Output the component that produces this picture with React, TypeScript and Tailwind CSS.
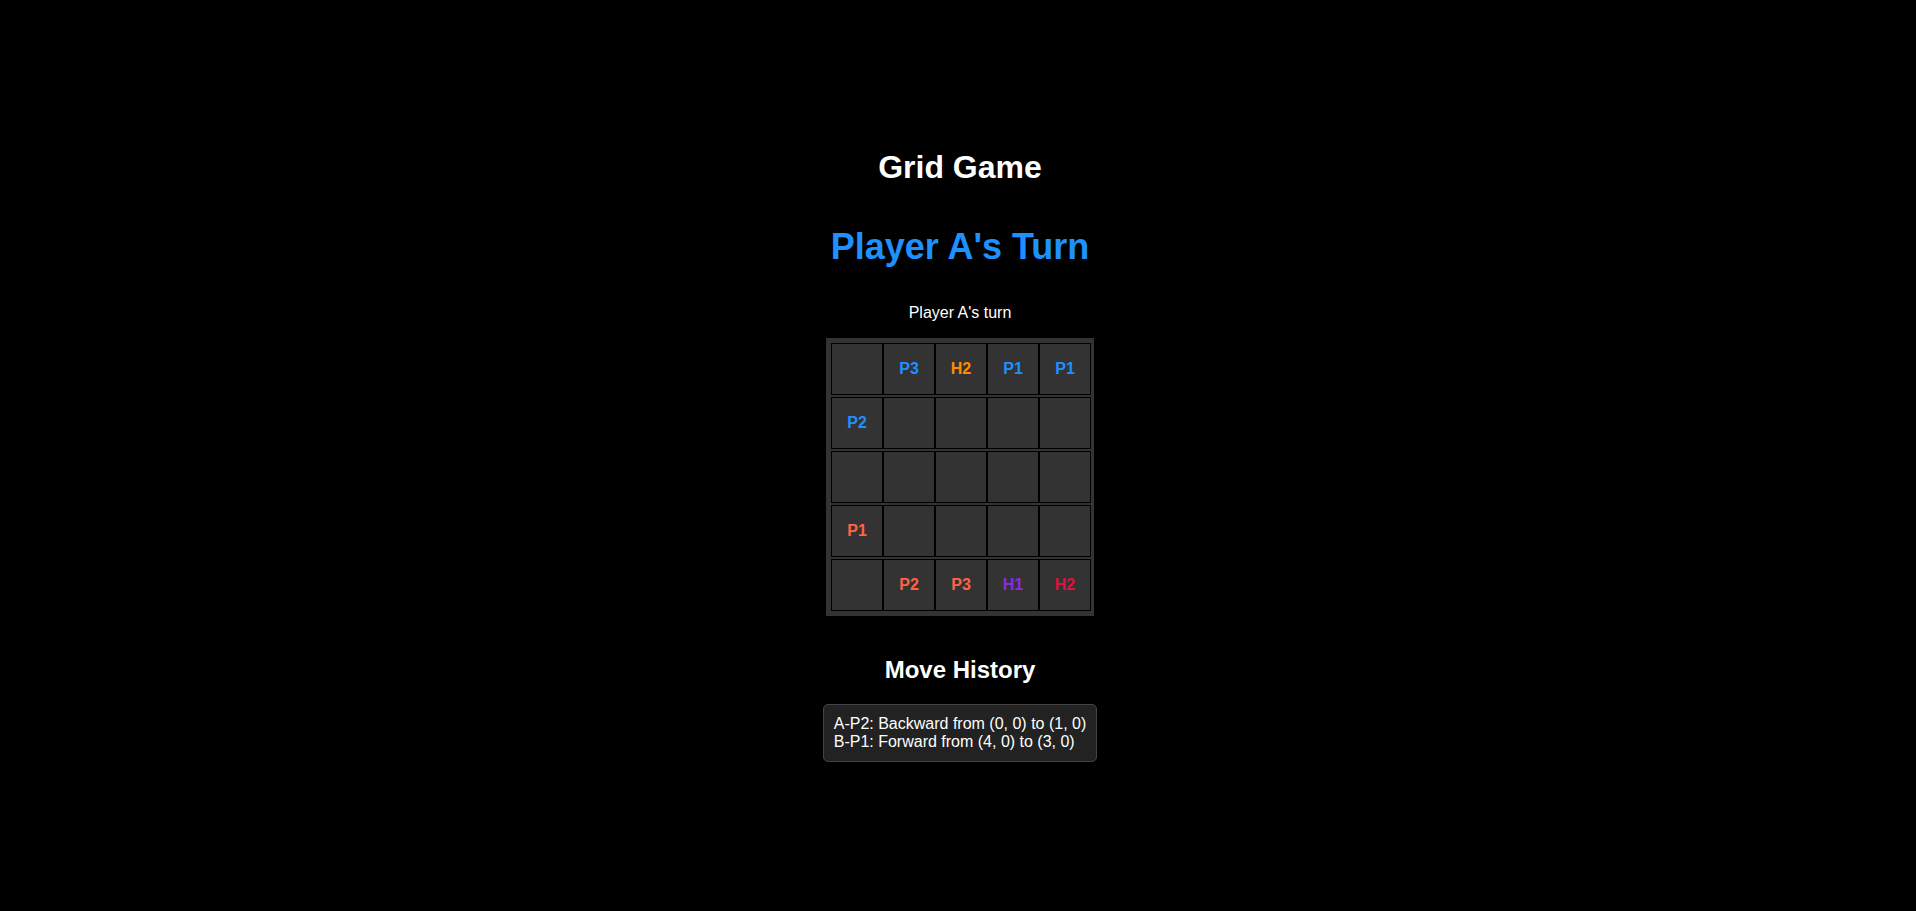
type Piece = { name: string; color: string };

const A = "text-[#1e90ff]";
const B = "text-[#ff6347]";

const board: (Piece | null)[][] = [
  [
    null,
    { name: "P3", color: A },
    { name: "H2", color: "text-[#ff8c00]" },
    { name: "P1", color: A },
    { name: "P1", color: A },
  ],
  [{ name: "P2", color: A }, null, null, null, null],
  [null, null, null, null, null],
  [{ name: "P1", color: B }, null, null, null, null],
  [
    null,
    { name: "P2", color: B },
    { name: "P3", color: B },
    { name: "H1", color: "text-[#8a2be2]" },
    { name: "H2", color: "text-[#dc143c]" },
  ],
];

const moves = [
  "A-P2: Backward from (0, 0) to (1, 0)",
  "B-P1: Forward from (4, 0) to (3, 0)",
];

function Cell({ piece, row, col }: { piece: Piece | null; row: number; col: number }) {
  return (
    <button
      type="button"
      aria-label={`${piece ? piece.name : "Empty"}, row ${row}, column ${col}`}
      className={`flex size-[52px] items-center justify-center border border-black bg-[#333] font-bold ${piece ? piece.color : ""}`}
    >
      {piece?.name}
    </button>
  );
}

export default function App() {
  return (
    <main className="flex min-h-screen flex-col items-center justify-center bg-black pl-1 font-['Liberation_Sans',Arial,sans-serif] text-base leading-[18px] text-white">
      <h1 className="text-[32px] leading-9 font-bold">Grid Game</h1>
      <h2 className="mt-[41px] text-4xl leading-[42px] font-bold text-[#1e90ff]">Player A's Turn</h2>
      <p className="mt-9">Player A's turn</p>
      <div className="mt-4 grid grid-cols-[repeat(5,50px)] gap-0.5 bg-[#333] p-[5px]">
        {board.map((cells, row) =>
          cells.map((piece, col) => (
            <Cell key={`${row}-${col}`} piece={piece} row={row} col={col} />
          )),
        )}
      </div>
      <section className="mt-10 flex flex-col items-center">
        <h3 className="text-2xl leading-7 font-bold">Move History</h3>
        <ul className="mt-5 rounded-[5px] border border-[#444] bg-[#222] p-2.5">
          {moves.map((move) => (
            <li key={move}>{move}</li>
          ))}
        </ul>
      </section>
    </main>
  );
}
